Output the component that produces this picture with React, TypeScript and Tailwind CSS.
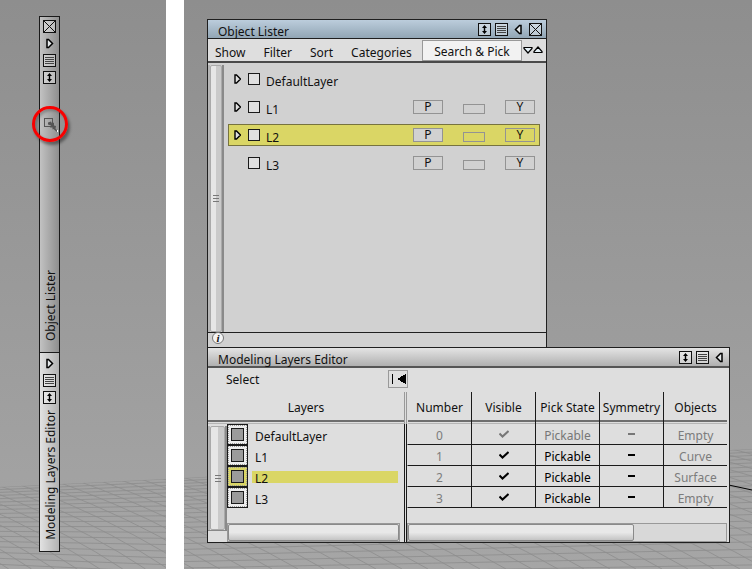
import React, { useState } from 'react';

interface Layer {
  id: number;
  name: string;
  objects: string;
  expandable: boolean;
}

const LAYERS: Layer[] = [
  { id: 0, name: 'DefaultLayer', objects: 'Empty', expandable: true },
  { id: 1, name: 'L1', objects: 'Curve', expandable: true },
  { id: 2, name: 'L2', objects: 'Surface', expandable: true },
  { id: 3, name: 'L3', objects: 'Empty', expandable: false },
];

const COLUMNS = ['Number', 'Visible', 'Pick State', 'Symmetry', 'Objects'];

export default function App() {
  const [selected, setSelected] = useState(2);

  return (
    <div className="grid min-h-screen grid-cols-[166fr_568fr] gap-[18px] bg-white font-['Noto_Sans',sans-serif] text-xs leading-4 text-[#111]">
      {/* Collapsed windows */}
      <section className="relative overflow-hidden bg-linear-to-b from-[#8e8e8e] to-[#a6a6a6] pt-4 pl-[39px]">
        <FloorGrid id="floor-narrow" left={38} right={30} spread={3} />
        <CollapsedStack />
      </section>

      {/* Expanded windows */}
      <section className="relative overflow-hidden bg-linear-to-b from-[#8e8e8e] to-[#a6a6a6] pt-[19px] pr-[22px] pl-[23px]">
        <FloorGrid id="floor-wide" left={29} right={0} spread={1} axis />
        <div className="relative">
          <ObjectLister selected={selected} onSelect={setSelected} />
          <LayersEditor selected={selected} onSelect={setSelected} />
        </div>
      </section>
    </div>
  );
}

// Windows

function CollapsedStack() {
  return (
    <div className="relative w-[21px] border border-[#1a1a1a]">
      <div className="flex min-h-[335px] flex-col items-center gap-1 bg-linear-to-r from-[#c2c2c2] to-[#8f8f8f] pt-[3px] pb-[11px]">
        <IconButton label="Close"><CloseIcon /></IconButton>
        <IconButton label="Expand"><TriangleIcon className="rotate-180" /></IconButton>
        <IconButton label="Menu"><ListIcon /></IconButton>
        <IconButton label="Resize"><ResizeIcon /></IconButton>
        <div className="relative mt-7 h-4 w-4">
          <span className="absolute top-1/2 left-1/2 h-9 w-9 -translate-x-1/2 -translate-y-1/2 rounded-full border-3 border-[#f80000] shadow-[2px_3px_3px_rgba(0,0,0,0.4),inset_2px_2px_3px_rgba(0,0,0,0.25)]" />
          <PointerIcon />
        </div>
        <span className="mt-auto mr-[-2px] rotate-180 [writing-mode:vertical-rl]">Object Lister</span>
      </div>
      <div className="flex flex-col items-center gap-1 border-t border-[#1a1a1a] bg-linear-to-r from-[#e2e2e2] to-[#b2b2b2] pt-1 pb-[11px]">
        <IconButton label="Expand"><TriangleIcon className="rotate-180" /></IconButton>
        <IconButton label="Menu"><ListIcon /></IconButton>
        <IconButton label="Resize"><ResizeIcon /></IconButton>
        <span className="mt-[2px] mr-[-2px] rotate-180 [writing-mode:vertical-rl]">Modeling Layers Editor</span>
      </div>
    </div>
  );
}

interface WindowProps {
  selected: number;
  onSelect: (id: number) => void;
}

function ObjectLister({ selected, onSelect }: WindowProps) {
  return (
    <div className="w-[65%] border border-b-0 border-[#1f1f1f] bg-[#d1d1d1]">
      <header className="flex h-[19px] items-center gap-1 border-b border-[#1f1f1f] bg-linear-to-b from-[#bccddc] to-[#92a6b5] pr-1 pl-[10px]">
        <h2 className="flex-1 pt-[6px]">Object Lister</h2>
        <IconButton label="Resize"><ResizeIcon /></IconButton>
        <IconButton label="Menu"><ListIcon /></IconButton>
        <IconButton label="Collapse"><TriangleIcon /></IconButton>
        <IconButton label="Close"><CloseIcon /></IconButton>
      </header>

      <nav className="flex h-6 items-center border-b-2 border-[#4a4a4a] bg-[#dedede] pl-[7px]">
        <div className="flex flex-1 gap-[18px] pt-[5px]">
          <button>Show</button>
          <button>Filter</button>
          <button>Sort</button>
          <button>Categories</button>
        </div>
        <button className="h-[21px] w-[100px] self-end border border-[#999] bg-[#f2f2f2] pt-[3px]">Search &amp; Pick</button>
        <span className="flex pr-[3px] pl-[1px]">
          <IconButton label="Next match"><SmallTriangle className="rotate-180" /></IconButton>
          <IconButton label="Previous match"><SmallTriangle /></IconButton>
        </span>
      </nav>

      <div className="flex h-[270px] border-b border-[#1f1f1f]">
        <VScroll className="mt-[2px] w-4" />
        <ul className="flex-1 pt-[2px] pr-[6px] pl-1">
          {LAYERS.map((layer) => (
            <li
              key={layer.id}
              onClick={() => onSelect(layer.id)}
              className={`my-[6px] flex h-[22px] items-center border pr-1 pl-[5px] first:mt-[3px] ${
                layer.id === selected ? 'border-[#77733f] bg-[#dad665]' : 'border-transparent'
              }`}
            >
              <button aria-label={`Expand ${layer.name}`} className={layer.expandable ? 'mr-[7px]' : 'invisible mr-[7px]'}>
                <ExpandIcon />
              </button>
              <input
                id={`layer-${layer.id}`}
                type="checkbox"
                className="h-3 w-3 appearance-none border border-[#1a1a1a] bg-[#e0e0e0] checked:bg-[#555]"
              />
              <label htmlFor={`layer-${layer.id}`} className="flex-1 pt-[6px] pl-[6px]">{layer.name}</label>
              {layer.id > 0 && (
                <span className="flex items-end gap-5">
                  <button className="h-[14px] w-[30px] border border-[#939393] bg-[#d1d1d1] leading-3">P</button>
                  <button aria-label="Colour" className="h-[10px] w-[22px] border border-[#939393]" />
                  <button className="h-[14px] w-[30px] border border-[#939393] leading-3">Y</button>
                </span>
              )}
            </li>
          ))}
        </ul>
      </div>

      <footer className="flex h-[14px] items-center pl-1">
        <button
          aria-label="Information"
          className="-mt-1 h-3 w-3 rounded-full border border-[#777] bg-[#f4f4f4] text-center font-['Liberation_Serif',serif] text-[11px] leading-[10px] font-bold italic"
        >
          i
        </button>
      </footer>
    </div>
  );
}

function LayersEditor({ selected, onSelect }: WindowProps) {
  return (
    <div className="border border-[#1f1f1f] bg-[#dedede]">
      <header className="flex h-5 items-center gap-1 border-b-2 border-[#555] bg-linear-to-b from-[#e4e4e4] to-[#b0b0b0] pr-[3px] pl-[10px]">
        <h2 className="flex-1 pt-[6px]">Modeling Layers Editor</h2>
        <IconButton label="Resize"><ResizeIcon /></IconButton>
        <IconButton label="Menu"><ListIcon /></IconButton>
        <IconButton label="Collapse"><TriangleIcon /></IconButton>
      </header>

      <div className="flex h-6 w-[200px] items-center justify-between pl-[18px]">
        <button>Select</button>
        <button aria-label="Jump to start" className="-mt-[2px] h-[18px] w-5 border border-[#999]">
          <svg viewBox="0 0 18 16" className="h-4 w-[18px]" shapeRendering="crispEdges">
            <path d="M3.5 3v10" stroke="#000" />
            <path d="M8 8l9-5v10z" fill="#000" />
          </svg>
        </button>
      </div>

      <div className="flex">
        {/* Layer names */}
        <div className="flex w-[196px] flex-col">
          <h3 className="h-8 pt-2 text-center shadow-[inset_0_-1px_#b5b5b5,inset_0_-2px_#ddd,inset_0_-4px_#6e6e6e]">Layers</h3>
          <div className="flex flex-1">
            <div className="flex w-[19px] flex-col">
              <VScroll className="mt-[2px] flex-1" />
              <div className="h-3 border-t border-[#888]" />
            </div>
            <div className="flex flex-1 flex-col">
              {LAYERS.map((layer) => (
                <div key={layer.id} className="flex h-[21px] items-center">
                  <button
                    aria-label={`Toggle ${layer.name}`}
                    className={`flex h-[21px] w-[21px] items-center justify-center border border-[#1a1a1a] ${
                      layer.id === selected ? 'bg-[#dad665]' : 'bg-[#eee]'
                    }`}
                  >
                    <span className="flex h-[19px] w-[19px] items-center justify-center border border-dotted border-[#999]">
                      <span className="h-[13px] w-[13px] border border-[#1a1a1a] bg-[#9b9b9b]" />
                    </span>
                  </button>
                  <button
                    onClick={() => onSelect(layer.id)}
                    className={`mr-[6px] ml-1 h-3 flex-1 pl-[3px] text-left leading-4 ${
                      layer.id === selected ? 'bg-[#dad665]' : ''
                    }`}
                  >
                    {layer.name}
                  </button>
                </div>
              ))}
              <HScroll className="mt-[15px] mr-1" thumb="w-full" />
            </div>
          </div>
        </div>

        {/* Splitter */}
        <div className="flex w-[3px] flex-col">
          <div className="h-8 border-x border-[#999]" />
          <div className="flex-1 border-x border-[#1a1a1a]" />
        </div>

        {/* Layer attributes */}
        <div className="flex-1 pr-[2px]">
          <table className="w-full table-fixed border-separate border-spacing-0 text-center">
            <thead>
              <tr>
                {COLUMNS.map((column) => (
                  <th
                    key={column}
                    className="h-8 border-l border-[#1a1a1a] p-0 font-normal whitespace-nowrap shadow-[inset_0_-1px_#b5b5b5,inset_0_-2px_#ddd,inset_0_-4px_#6e6e6e] first:border-transparent"
                  >
                    {column}
                  </th>
                ))}
              </tr>
            </thead>
            <tbody>
              {LAYERS.map((layer) => (
                <tr key={layer.id} className={layer.id === 0 ? 'text-[#777]' : 'text-black'}>
                  <Cell muted>{layer.id}</Cell>
                  <Cell><CheckIcon /></Cell>
                  <Cell>Pickable</Cell>
                  <Cell><span className="mx-auto block h-[2px] w-[7px] bg-current" /></Cell>
                  <Cell muted>{layer.objects}</Cell>
                </tr>
              ))}
            </tbody>
          </table>
          <HScroll className="mt-[15px]" thumb="w-[71%]" />
        </div>
      </div>
    </div>
  );
}

// Sub-components

function Cell({ children, muted }: { children: React.ReactNode; muted?: boolean }) {
  const isText = typeof children === 'string' || typeof children === 'number';
  return (
    <td
      className={`h-[21px] border-b border-l border-[#1a1a1a] first:border-l-transparent ${isText ? 'p-0 pt-1' : 'p-0'} ${
        muted ? 'text-[#7c7c7c]' : ''
      }`}
    >
      {children}
    </td>
  );
}

function VScroll({ className }: { className: string }) {
  return (
    <div className={`flex border-r-2 border-l-2 border-r-[#8a8a8a] border-l-[#b5b5b5] ${className}`}>
      <div className="flex flex-1 flex-col items-center justify-center gap-[2px] rounded-xs border border-[#aaa] bg-linear-to-r from-[#e6e6e6] from-50% to-[#cacaca] to-50%">
        <span className="h-px w-[6px] bg-[#777]" />
        <span className="h-px w-[6px] bg-[#777]" />
        <span className="h-px w-[6px] bg-[#777]" />
      </div>
    </div>
  );
}

function HScroll({ className, thumb }: { className: string; thumb: string }) {
  return (
    <div className={`h-[19px] border border-[#999] bg-[#d8d8d8] ${className}`}>
      <div className={`h-full rounded-xs border border-[#8a8a8a] bg-linear-to-b from-[#e8e8e8] from-50% to-[#c4c4c4] ${thumb}`} />
    </div>
  );
}

function IconButton({ label, children }: { label: string; children: React.ReactNode }) {
  return (
    <button aria-label={label} className="block shrink-0">
      {children}
    </button>
  );
}

function CloseIcon() {
  return (
    <svg viewBox="0 0 13 13" className="h-[13px] w-[13px]" fill="none" stroke="#111">
      <rect x="0.5" y="0.5" width="12" height="12" fill="#fff" fillOpacity="0.35" />
      <path d="M1 1l11 11M12 1L1 12" />
    </svg>
  );
}

function ListIcon() {
  return (
    <svg viewBox="0 0 13 13" className="h-[13px] w-[13px]" fill="none" stroke="#111">
      <rect x="0.5" y="0.5" width="12" height="12" fill="#fff" fillOpacity="0.35" />
      <path d="M2 3.5h9M2 5.5h9M2 7.5h9M2 9.5h9" stroke="#444" />
    </svg>
  );
}

function ResizeIcon() {
  return (
    <svg viewBox="0 0 13 13" className="h-[13px] w-[13px]">
      <rect x="0.5" y="0.5" width="12" height="12" fill="#fff" fillOpacity="0.35" stroke="#111" />
      <path d="M6.500 2L9 5H7.200v3H9l-2.500 3L4 8h1.800V5H4z" fill="#000" />
    </svg>
  );
}

function TriangleIcon({ className = '' }: { className?: string }) {
  return (
    <svg viewBox="0 0 13 13" className={`h-[13px] w-[13px] ${className}`}>
      <path d="M9 2.500v8h-1.500l-4-4 4-4z" fill="#e4e8ea" stroke="#000" strokeWidth="1.5" />
    </svg>
  );
}

function SmallTriangle({ className = '' }: { className?: string }) {
  return (
    <svg viewBox="0 0 10 8" className={`h-2 w-[10px] ${className}`}>
      <path d="M5 1l4 4.500v1H1v-1z" fill="#e4f0f6" stroke="#000" strokeWidth="1.2" />
    </svg>
  );
}

function ExpandIcon() {
  return (
    <svg viewBox="0 0 7 10" className="h-[10px] w-[7px]">
      <path d="M1 1h1.500l4 4-4 4H1z" fill="#e0e0e0" stroke="#000" strokeWidth="1.4" />
    </svg>
  );
}

function CheckIcon() {
  return (
    <svg viewBox="0 0 10 8" className="mx-auto h-2 w-[10px]" fill="none" stroke="currentColor" strokeWidth="2">
      <path d="M0.500 3.500L3.500 6.500 9.500 1" />
    </svg>
  );
}

function PointerIcon() {
  return (
    <svg viewBox="0 0 16 16" className="relative h-4 w-4">
      <rect x="2.500" y="2.500" width="8" height="8" fill="none" stroke="#555" />
      <path d="M6 6.500l3-1 1 2 2-1v3l2 .5-.5 2.500 2.500 3-1 .5-3.500-3-1 .5v-2H8l1-2-3-1z" fill="#555" />
      <path d="M15.500 14v2.500" stroke="#fff" />
    </svg>
  );
}

// Perspective floor behind the windows

interface FloorGridProps {
  id: string;
  left: number;
  right: number;
  spread: number;
  axis?: boolean;
}

function FloorGrid({ id, left, right, spread, axis }: FloorGridProps) {
  const rows = Array.from({ length: 26 }, (_, i) => i * 2.5 + i * i * 0.1);
  const diagonals = Array.from({ length: 60 }, (_, i) => (i * 26 - 700) * spread);

  return (
    <svg
      viewBox="0 0 568 120"
      preserveAspectRatio="none"
      className="absolute inset-x-0 bottom-0 h-[120px] w-full"
      fill="none"
      stroke="#8d8d8d"
      strokeWidth="0.8"
    >
      <clipPath id={id}>
        <path d={`M0 ${left}L568 ${right}V120H0z`} />
      </clipPath>
      <g clipPath={`url(#${id})`}>
        {rows.map((y) => (
          <path key={y} vectorEffect="non-scaling-stroke" d={`M0 ${left + y}L568 ${right + y * 1.2}`} />
        ))}
        {diagonals.map((x) => (
          <path key={x} vectorEffect="non-scaling-stroke" d={`M${x} 0Q${x + 200 * spread} 50 ${x + 320 * spread} 120`} />
        ))}
      </g>
      {axis && <path d="M540 35L568 41" stroke="#000" strokeWidth="1" />}
    </svg>
  );
}
